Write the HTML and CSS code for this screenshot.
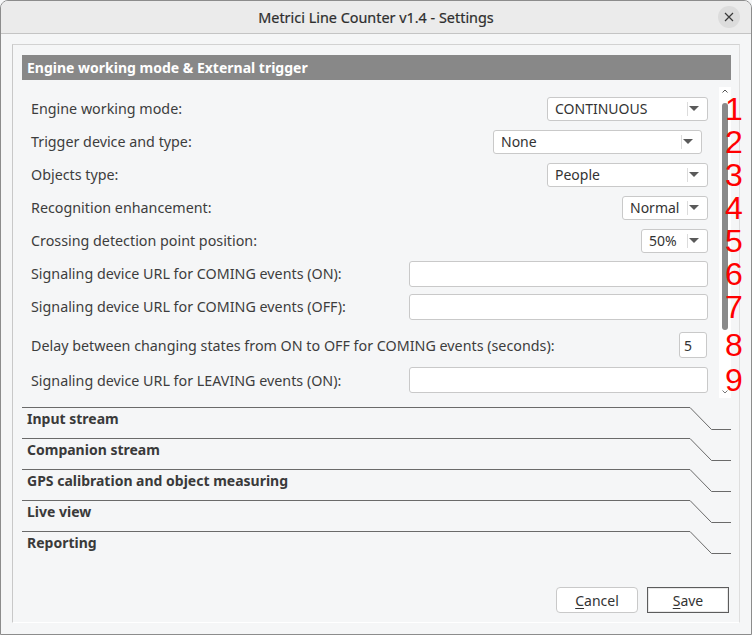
FILE: index.html
```html
<!DOCTYPE html>
<html>
<head>
<meta charset="utf-8">
<link rel="stylesheet" href="styles.css">
</head>
<body>
<div class="window">
  <div class="titlebar">
    <span class="title">Metrici Line Counter v1.4 - Settings</span>
    <span class="close"><svg width="10" height="10" viewBox="0 0 10 10"><path d="M1 1 L9 9 M9 1 L1 9" stroke="#3a3a3a" stroke-width="1.2" fill="none"/></svg></span>
  </div>
  <div class="body">
    <div class="frame">
      <div class="group-header">Engine working mode &amp; External trigger</div>
      <div class="viewport">
        <div class="rows">
          <div class="row"><span class="label">Engine working mode:</span><div class="select w-cont"><span class="val">CONTINUOUS</span><span class="arrow"><i></i></span></div><span class="num">1</span></div>
          <div class="row"><span class="label">Trigger device and type:</span><div class="select w-none"><span class="val">None</span><span class="arrow"><i></i></span></div><span class="num">2</span></div>
          <div class="row"><span class="label">Objects type:</span><div class="select w-cont"><span class="val">People</span><span class="arrow"><i></i></span></div><span class="num">3</span></div>
          <div class="row"><span class="label">Recognition enhancement:</span><div class="select w-normal"><span class="val">Normal</span><span class="arrow"><i></i></span></div><span class="num">4</span></div>
          <div class="row"><span class="label">Crossing detection point position:</span><div class="select w-pct"><span class="val">50%</span><span class="arrow"><i></i></span></div><span class="num">5</span></div>
          <div class="row"><span class="label">Signaling device URL for COMING events (ON):</span><div class="input w-url"></div><span class="num">6</span></div>
          <div class="row"><span class="label">Signaling device URL for COMING events (OFF):</span><div class="input w-url"></div><span class="num">7</span></div>
          <div class="row row-tall"><span class="label">Delay between changing states from ON to OFF for COMING events (seconds):</span><div class="input w-delay">5</div><span class="num">8</span></div>
          <div class="row row-last"><span class="label">Signaling device URL for LEAVING events (ON):</span><div class="input w-url"></div><span class="num">9</span></div>
        </div>
        <div class="scrollbar">
          <svg class="sb-up" width="6" height="4" viewBox="0 0 6 4"><path d="M0.5 3.5 L3 1 L5.5 3.5" stroke="#555" stroke-width="1" fill="none"/></svg>
          <div class="thumb"></div>
          <svg class="sb-down" width="6" height="4" viewBox="0 0 6 4"><path d="M0.5 0.5 L3 3 L5.5 0.5" stroke="#777" stroke-width="1" fill="none"/></svg>
        </div>
      </div>
      <div class="sections">
        <div class="section"><div class="sec-title">Input stream</div><svg class="sec-tail" width="41" height="24" viewBox="0 0 41 24"><path d="M0 0.5 L21.5 22.5 H41" stroke="#6a6a6a" stroke-width="1" fill="none"/></svg></div>
        <div class="section"><div class="sec-title">Companion stream</div><svg class="sec-tail" width="41" height="24" viewBox="0 0 41 24"><path d="M0 0.5 L21.5 22.5 H41" stroke="#6a6a6a" stroke-width="1" fill="none"/></svg></div>
        <div class="section"><div class="sec-title">GPS calibration and object measuring</div><svg class="sec-tail" width="41" height="24" viewBox="0 0 41 24"><path d="M0 0.5 L21.5 22.5 H41" stroke="#6a6a6a" stroke-width="1" fill="none"/></svg></div>
        <div class="section"><div class="sec-title">Live view</div><svg class="sec-tail" width="41" height="24" viewBox="0 0 41 24"><path d="M0 0.5 L21.5 22.5 H41" stroke="#6a6a6a" stroke-width="1" fill="none"/></svg></div>
        <div class="section"><div class="sec-title">Reporting</div><svg class="sec-tail" width="41" height="24" viewBox="0 0 41 24"><path d="M0 0.5 L21.5 22.5 H41" stroke="#6a6a6a" stroke-width="1" fill="none"/></svg></div>
      </div>
      <div class="buttons">
        <div class="btn btn-cancel"><u>C</u>ancel</div>
        <div class="btn btn-save"><u>S</u>ave</div>
      </div>
    </div>
  </div>
</div>
</body>
</html>
```

FILE: styles.css
```css
* { box-sizing: border-box; }
html, body { margin: 0; padding: 0; }
body {
  width: 752px;
  height: 635px;
  background: #f5f6f7;
  font-family: "Noto Sans", "DejaVu Sans", sans-serif;
  font-size: 14px;
  color: #3d3d3d;
  overflow: hidden;
}
.window {
  width: 752px;
  height: 635px;
  border: 1px solid #8c8c8c;
  border-radius: 8px 8px 0 0;
  background: #f5f6f7;
  display: flex;
  flex-direction: column;
  overflow: hidden;
}
.titlebar {
  height: 33px;
  flex: none;
  background: #ebebeb;
  border-bottom: 1px solid #c4c4c4;
  position: relative;
  display: flex;
  align-items: center;
  justify-content: center;
}
.title {
  font-size: 14.4px;
  color: #2e2e2e;
  -webkit-text-stroke: 0.2px #2e2e2e;
}
.close {
  position: absolute;
  right: 11px;
  top: 5px;
  width: 22px;
  height: 22px;
  border-radius: 50%;
  background: #dcdcdc;
  display: flex;
  align-items: center;
  justify-content: center;
}
.body {
  flex: 1;
  padding: 10px 11px 11px 11px;
  display: flex;
}
.frame {
  flex: 1;
  border: 1px solid #d2d2d2;
  border-left-color: #c8c8c8;
  border-right-color: #dedede;
  border-bottom-color: #ffffff;
  padding: 10px 8px 9px 9px;
  display: flex;
  flex-direction: column;
}
.group-header {
  height: 25px;
  flex: none;
  background: #888888;
  color: #ffffff;
  font-weight: bold;
  padding-left: 5px;
  line-height: 25px;
}
.viewport {
  height: 318px;
  flex: none;
  display: flex;
}
.rows {
  flex: 1;
  padding: 12px 11px 0 9px;
}
.row {
  height: 33px;
  display: flex;
  align-items: center;
  justify-content: space-between;
  position: relative;
}
.row-tall { height: 44px; }
.row-last { height: 26px; }
.label {
  white-space: nowrap;
  color: #3d3d3d;
  font-size: 14.3px;
}
.select, .input {
  height: 24px;
  background: #ffffff;
  border: 1px solid #c9c9c9;
  border-radius: 3px;
  display: flex;
  align-items: center;
  color: #333333;
}
.select .val {
  flex: 1;
  padding-left: 7px;
  white-space: nowrap;
}
.select .arrow {
  height: 14px;
  border-left: 1px solid #dcdcdc;
  padding: 0 8px 0 1px;
  display: flex;
  align-items: center;
}
.select .arrow i {
  display: block;
  width: 0;
  height: 0;
  border-left: 5px solid transparent;
  border-right: 5px solid transparent;
  border-top: 5px solid #5a5a5a;
}
.w-cont { width: 161px; }
.w-none { width: 209px; margin-right: 6px; }
.w-normal { width: 86px; }
.w-pct { width: 67px; }
.w-url { width: 299px; height: 26px; }
.w-delay { width: 28px; height: 26px; padding-left: 4px; margin-right: 1px; }
.num {
  position: absolute;
  left: calc(100% + 17px);
  top: 50%;
  margin-top: -13px;
  height: 26px;
  font-family: "Liberation Sans", Arial, sans-serif;
  font-size: 32px;
  line-height: 26px;
  color: #ff0000;
}
.scrollbar {
  width: 12px;
  flex: none;
  margin-top: 7px;
  background: #ffffff;
  display: flex;
  flex-direction: column;
  align-items: center;
  padding-top: 2px;
}
.sb-up { display: block; margin-left: 0; }
.thumb {
  width: 6px;
  height: 227px;
  margin-top: 10px;
  border-radius: 3px;
  background: #8a8a8a;
}
.sb-down { display: block; margin-top: auto; margin-bottom: 4px; }
.sections {
  margin-top: 9px;
}
.section {
  height: 31px;
  display: flex;
}
.sec-title {
  flex: 1;
  border-top: 1px solid #6a6a6a;
  padding-left: 5px;
  font-weight: bold;
  color: #3a3a3a;
  line-height: 22px;
}
.sec-tail {
  display: block;
  flex: none;
}
.buttons {
  margin-top: auto;
  display: flex;
  justify-content: flex-end;
  gap: 9px;
  padding-right: 2px;
}
.btn {
  width: 82px;
  height: 26px;
  background: #ffffff;
  display: flex;
  align-items: center;
  justify-content: center;
  color: #333333;
}
.btn u { text-decoration: underline; text-underline-offset: 2px; }
.btn-cancel {
  border: 1px solid #c9c9c9;
  border-radius: 4px;
}
.btn-save {
  border: 1px solid #5c5c5c;
  box-shadow: inset 0 0 0 1px #e8e8e8;
}
```
